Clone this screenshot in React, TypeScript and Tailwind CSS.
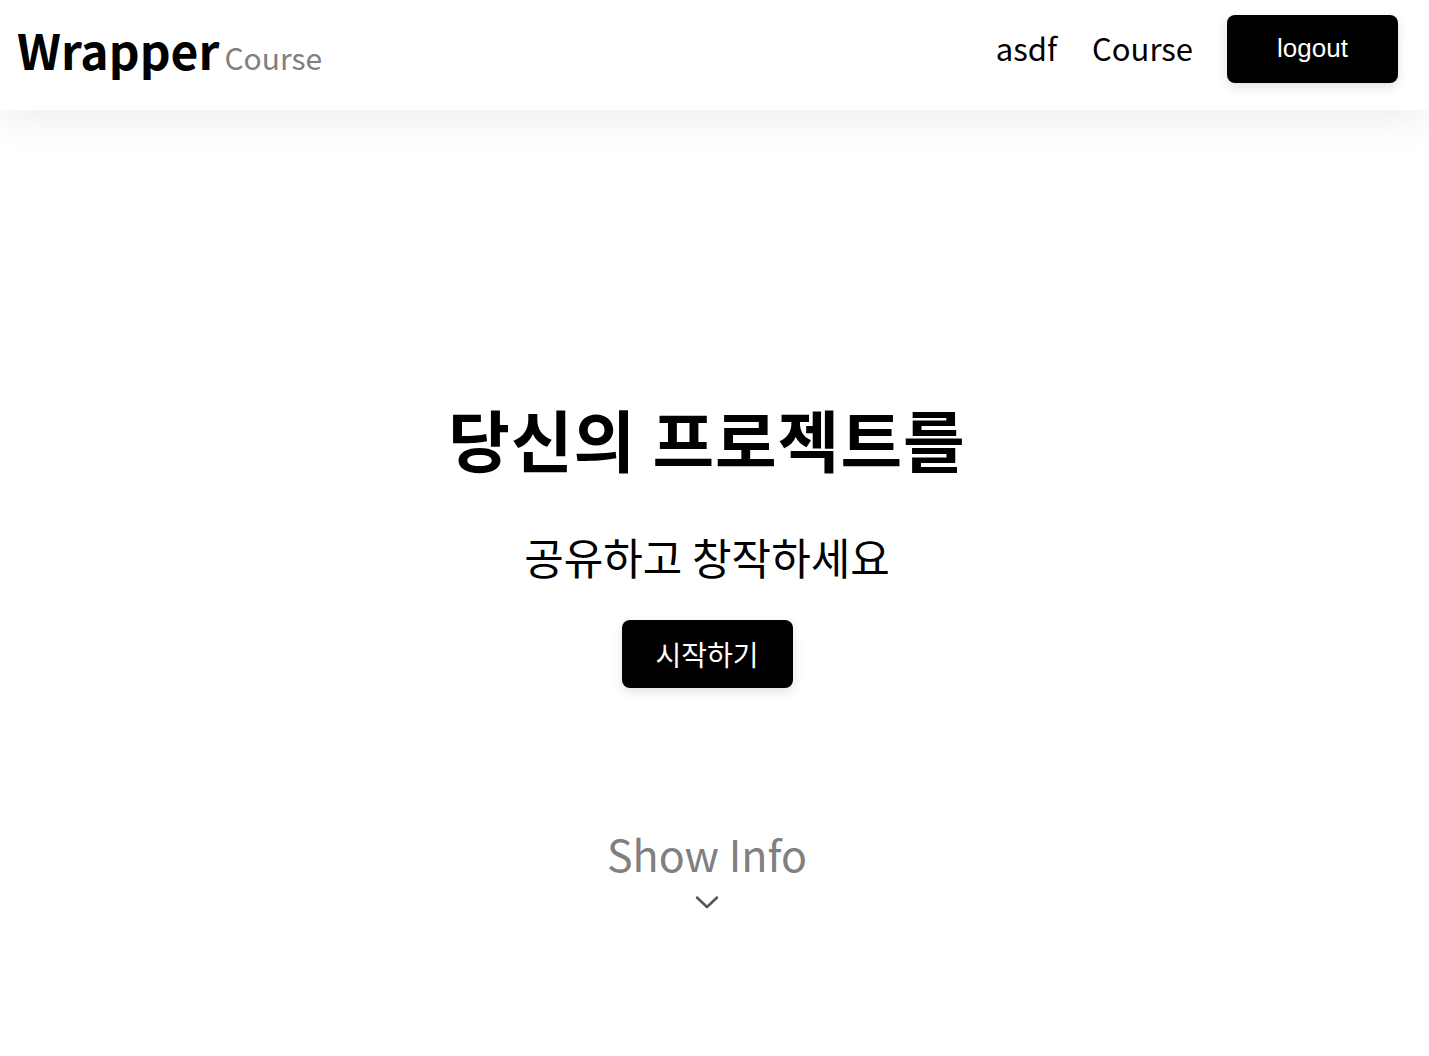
import React from "react";

export default function App() {
  const font = { fontFamily: '"Noto Sans CJK KR", "Noto Sans", sans-serif' };
  return (
    <div className="min-h-screen bg-white" style={font}>
      <header className="relative z-10 flex h-[110px] items-center justify-between bg-white pl-[17px] pr-[31px] shadow-[0_10px_40px_rgba(0,0,0,0.07)]">
        <div className="mb-[12px] flex items-baseline gap-[5px]">
          <span className="text-[48px] font-bold leading-none text-black">Wrapper</span>
          <span className="text-[30px] leading-none text-[#808080]">Course</span>
        </div>
        <nav className="flex items-center">
          <a className="mb-[16px] mr-[35px] text-[31px] leading-none text-black">asdf</a>
          <a className="mb-[16px] mr-[34px] text-[31px] leading-none text-black">Course</a>
          <button
            className="mb-[13px] h-[68px] w-[171px] rounded-[8px] bg-black text-[26px] text-white shadow-[0_4px_12px_rgba(0,0,0,0.12)]"
            style={{ fontFamily: '"Liberation Sans", Arial, sans-serif' }}
          >
            logout
          </button>
        </nav>
      </header>
      <main className="flex flex-col items-center pr-[15px] pt-[294px]">
        <h1 className="text-[67px] font-bold leading-none tracking-[1px] text-black">당신의 프로젝트를</h1>
        <p className="mt-[64px] text-[43px] leading-none text-black">공유하고 창작하세요</p>
        <button className="mt-[42px] flex h-[68px] w-[171px] items-center justify-center rounded-[8px] bg-black text-[28px] text-white shadow-[0_4px_12px_rgba(0,0,0,0.12)]">
          시작하기
        </button>
        <div className="mt-[144px] flex flex-col items-center">
          <span className="text-[43px] leading-none text-[#808080]">Show Info</span>
          <svg className="mt-[20px]" width="26" height="16" viewBox="0 0 26 16" fill="none">
            <path d="M3 2.5 L13 12 L23 2.5" stroke="#555" strokeWidth="2.5" strokeLinecap="round" strokeLinejoin="round" />
          </svg>
        </div>
      </main>
    </div>
  );
}
